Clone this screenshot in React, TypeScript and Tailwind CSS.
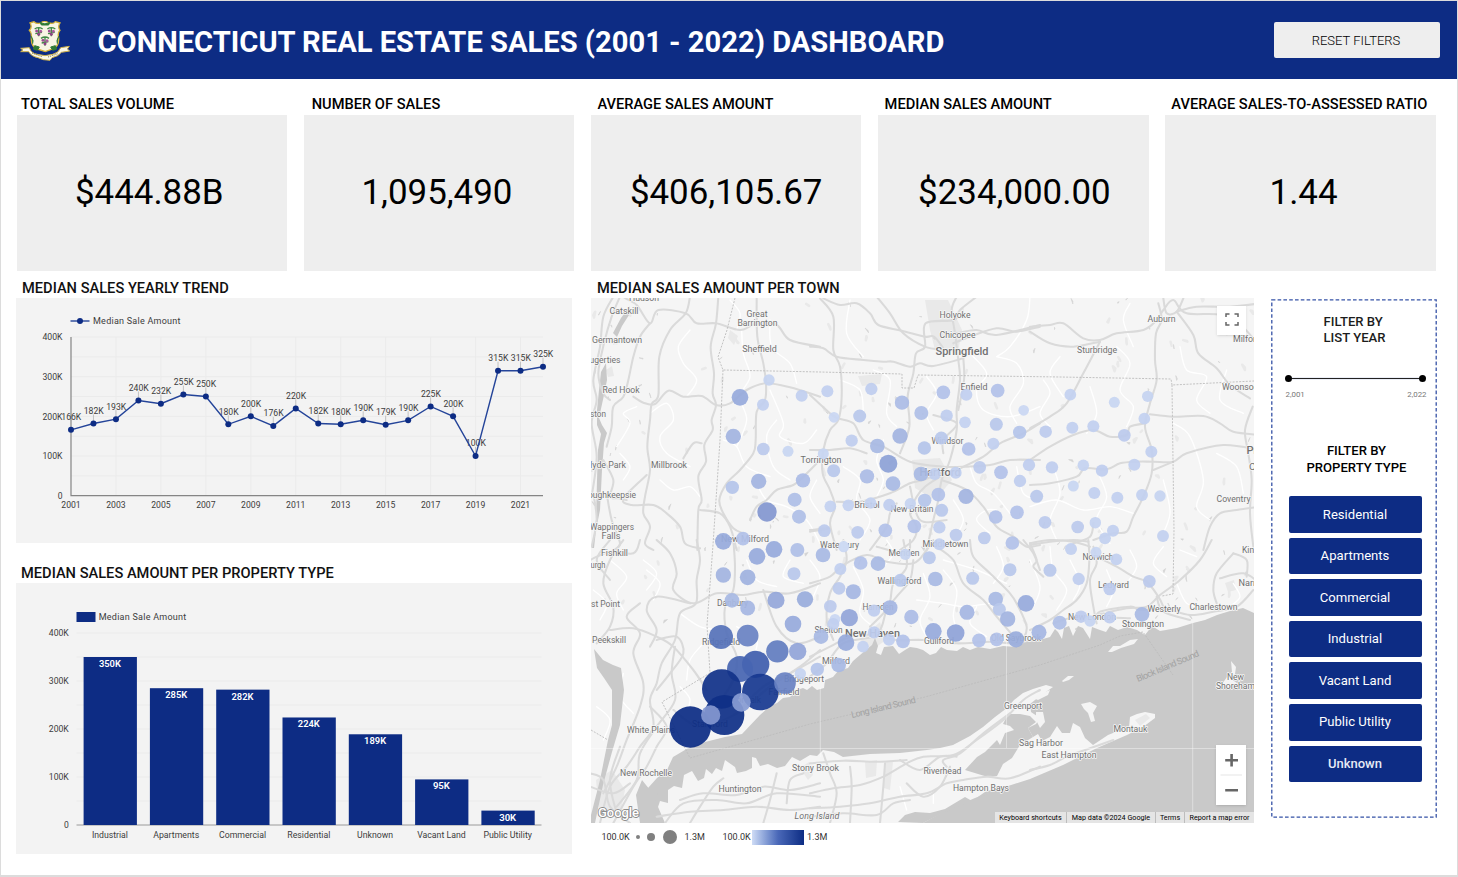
import React from "react";

const NAVY = "#0d2c84";

type Pt = [number, number];

/* ---------- helpers ---------- */

function smooth(pts: string): string {
  const p = pts
    .trim()
    .split(/\s+/)
    .map((s) => s.split(",").map(Number) as Pt);
  let d = `M${p[0][0]},${p[0][1]}`;
  for (let i = 0; i < p.length - 1; i++) {
    const a = p[i - 1] || p[i];
    const b = p[i];
    const c = p[i + 1];
    const e = p[i + 2] || c;
    d += `C${(b[0] + (c[0] - a[0]) / 6).toFixed(1)},${(b[1] + (c[1] - a[1]) / 6).toFixed(1)} ${(c[0] - (e[0] - b[0]) / 6).toFixed(1)},${(c[1] - (e[1] - b[1]) / 6).toFixed(1)} ${c[0]},${c[1]}`;
  }
  return d;
}

/* ---------- header ---------- */

function Crest() {
  return (
    <svg width="50" height="40" viewBox="0 0 150 120" className="mt-[1px] shrink-0">
      <path d="M30,6 L42,2 Q50,10 60,6 L74,0 L88,6 Q100,10 106,2 L120,6 Q112,18 120,28 Q112,36 116,50 Q118,76 98,84 L76,92 L52,84 Q32,76 34,50 Q36,36 28,28 Q38,18 30,6Z" fill="#f8f5e4" stroke="#d3b23a" strokeWidth="4" />
      <path d="M60,3 Q74,14 90,3 L86,12 H64Z M34,46 q8,14 4,22 M116,46 q-8,14 -4,22 M44,74 l14,4 -6,10 -12,-4Z M106,74 l-14,4 6,10 12,-4Z" fill="#2f7a34" stroke="#2f7a34" strokeWidth="3" />
      {[
        [56, 30],
        [94, 30],
        [75, 58],
      ].map(([x, y]) => (
        <g key={x}>
          <path d={`M${x - 12},${y - 6} q12,-8 24,0 M${x - 10},${y + 8} l20,-4 M${x},${y - 8} v24`} fill="none" stroke="#3f8a45" strokeWidth="4" />
          <circle cx={x - 6} cy={y} r="4.5" fill="#9c4f93" />
          <circle cx={x + 6} cy={y + 1} r="4.5" fill="#a85a9c" />
          <circle cx={x} cy={y + 10} r="4.5" fill="#8e4386" />
        </g>
      ))}
      <path d="M2,82 L28,80 Q34,98 52,100 L75,104 L98,100 Q116,96 122,80 L148,76 L142,84 L149,90 L124,94 Q116,106 96,110 L90,118 L70,116 L54,110 Q34,106 26,92 L2,92 L9,87Z" fill="#fbf8ea" stroke="#cdb04a" strokeWidth="3" />
      <path d="M36,96 L66,107 M84,108 L114,98" stroke="#7a7348" strokeWidth="3" strokeDasharray="3 3" />
    </svg>
  );
}

/* ---------- KPI cards ---------- */

function Kpi({ title, value, pad, shift }: { title: string; value: string; pad: string; shift: string }) {
  return (
    <section className="w-[270.5px]">
      <h2 className={`flex h-[23px] items-center whitespace-nowrap pt-[2px] text-[14.65px] font-medium leading-none text-black ${pad}`}>{title}</h2>
      <div className={`flex h-[156px] items-center justify-center bg-[#eeeeee] text-[34.9px] leading-none text-black ${shift}`}>{value}</div>
    </section>
  );
}

/* ---------- line chart ---------- */

const trend = [166, 182, 193, 240, 232, 255, 250, 180, 200, 176, 220, 182, 180, 190, 179, 190, 225, 200, 100, 315, 315, 325];

function LineChart() {
  const x = (i: number) => 71 + i * 22.476;
  const y = (v: number) => 495.7 - v * 0.3967;
  return (
    <svg width="556" height="245" viewBox="16 298 556 245" className="block bg-[#f3f3f3]" fontSize="9" fill="#3c3c3c">
      {[50, 100, 150, 200, 250, 300, 350, 400].map((v) => (
        <line key={v} x1="71" x2="543" y1={y(v)} y2={y(v)} stroke="#ebebeb" />
      ))}
      {[2, 4, 6, 8, 10, 12, 14, 16, 18, 20].map((i) => (
        <line key={i} x1={x(i)} x2={x(i)} y1="337" y2="495" stroke="#ebebeb" />
      ))}
      <path d="M71,337V495.7H543" fill="none" stroke="#858585" strokeWidth="1.2" />
      {[0, 100, 200, 300, 400].map((v) => (
        <text key={v} x="62.5" y={y(v) + 3.3} textAnchor="end" textLength={v ? 20 : 4.8} lengthAdjust="spacingAndGlyphs">
          {v ? `${v}K` : "0"}
        </text>
      ))}
      {[0, 2, 4, 6, 8, 10, 12, 14, 16, 18, 20].map((i) => (
        <text key={i} x={x(i)} y="508" textAnchor="middle" textLength="19.4" lengthAdjust="spacingAndGlyphs">
          {2001 + i}
        </text>
      ))}
      {trend.map((v, i) => (
        <g key={i}>
          <line x1={x(i)} x2={x(i)} y1={y(v) - 9} y2={y(v)} stroke="#b5b5b5" strokeWidth=".8" />
          <text x={x(i) + 0.3} y={y(v) - 9.6} textAnchor="middle" textLength="20" lengthAdjust="spacingAndGlyphs">
            {v}K
          </text>
        </g>
      ))}
      <polyline points={trend.map((v, i) => `${x(i)},${y(v)}`).join(" ")} fill="none" stroke="#244499" strokeWidth="1.4" />
      {trend.map((v, i) => (
        <circle key={i} cx={x(i)} cy={y(v)} r="3" fill={NAVY} />
      ))}
      <line x1="70.5" x2="89.5" y1="321" y2="321" stroke="#244499" strokeWidth="1.4" />
      <circle cx="80" cy="321" r="3" fill={NAVY} />
      <text x="93" y="324.3" textLength="87.5">
        Median Sale Amount
      </text>
    </svg>
  );
}

/* ---------- bar chart ---------- */

const types: [string, number, number][] = [
  ["Industrial", 350, 36],
  ["Apartments", 285, 46],
  ["Commercial", 282, 47],
  ["Residential", 224, 43],
  ["Unknown", 189, 36],
  ["Vacant Land", 95, 48.5],
  ["Public Utility", 30, 48.5],
];

function BarChart() {
  const y = (v: number) => 825 - v * 0.48;
  return (
    <svg width="556" height="271" viewBox="16 583 556 271" className="block bg-[#f3f3f3]" fontSize="9" fill="#3c3c3c">
      {[50, 100, 150, 200, 250, 300, 350, 400].map((v) => (
        <line key={v} x1="76.5" x2="541.5" y1={y(v)} y2={y(v)} stroke="#ebebeb" />
      ))}
      {[0, 100, 200, 300, 400].map((v) => (
        <text key={v} x="68.8" y={y(v) + 3} textAnchor="end" textLength={v ? 20 : 4.8} lengthAdjust="spacingAndGlyphs">
          {v ? `${v}K` : "0"}
        </text>
      ))}
      <line x1="76.5" x2="541.5" y1="825" y2="825" stroke="#9a9a9a" />
      {types.map(([name, v, w], i) => {
        const left = 83.6 + i * 66.3;
        return (
          <g key={name}>
            <rect x={left} y={y(v)} width="53.3" height={v * 0.48} fill={NAVY} />
            <text x={left + 26.3} y={y(v) + 10} textAnchor="middle" fontWeight="600" fill="#fff" textLength={v > 99 ? 22 : 17} lengthAdjust="spacingAndGlyphs">
              {v}K
            </text>
            <text x={left + 26.3} y="838" textAnchor="middle" textLength={w} lengthAdjust="spacingAndGlyphs">
              {name}
            </text>
          </g>
        );
      })}
      <rect x="76.5" y="612" width="19" height="10" fill={NAVY} />
      <text x="98.7" y="620.2" textLength="87.5">
        Median Sale Amount
      </text>
    </svg>
  );
}

/* ---------- map ---------- */

// Each tile holds marks measured on a 3x grid whose origin is (ox, oy).
type Tile = { ox: number; oy: number; roads: string[]; thin: string[]; dots: string };

const tiles: Tile[] = [
  {
    ox: 590,
    oy: 280,
    roads: [
      "300,50 287,100 240,150 208,230 205,345 185,372 180,420 172,500 180,570 165,650 160,700 180,740 165,790 190,810",
      "385,50 378,130 362,200 372,280 368,340 378,375 365,420 368,450 343,495 348,545 325,590 335,660 325,690 322,810",
      "130,350 160,368 195,372 235,332 280,350 335,348 378,375 420,370 470,330 527,310 600,322 690,350",
      "500,50 502,170 520,250 528,310 525,360 500,395 497,480 490,520 450,570 410,610 388,660 400,700 430,745 460,760",
      "60,0 100,50 140,75 180,130 205,90 287,100 320,130 378,130 450,150 500,130 560,135 600,180 690,200",
      "180,130 150,170 130,230 115,300 100,350 70,380 65,440 50,500",
      "70,50 40,110 30,200 10,300 20,360 5,430 20,530 5,650",
      "90,50 65,110 42,190 25,280 40,340 60,360",
      "170,585 100,655 125,675 190,675 230,700 270,740 285,790 330,805",
      "335,490 310,490 280,535",
      "40,540 70,600 60,650 85,655 110,660",
      "50,640 65,720 90,790 70,810",
      "480,720 500,680 530,660 560,630 610,615 640,590 690,540",
      "330,690 390,700 420,740 440,810",
      "10,640 20,720 5,800",
    ],
    thin: [
      "455,150 460,220 480,290 450,350 470,420 440,500",
      "540,120 545,200 600,250 620,310",
      "300,150 265,200 280,250 320,300 290,350",
      "180,400 230,370 250,420 210,470 230,520 300,560",
      "80,500 120,430 100,400 140,380",
      "560,420 530,470 550,560 600,600",
      "400,480 440,500 470,560 540,590",
      "210,600 250,630 300,620 330,650",
      "540,330 580,430 570,470 640,490 680,450",
      "100,600 120,560 90,520",
      "420,60 450,100 440,150",
      "500,610 530,660 590,680 650,720 690,790",
    ],
    dots: "450,352,25 537,300,17 519,374,18 635,347,18 430,469,23 520,507,19 594,514,16.5 427,622,20 506,604,23 639,601,21.5 614,659,21 627,710,21 531,696,29 400,784,25 459,776,20.5",
  },
  {
    ox: 810,
    oy: 280,
    roads: [
      "0,200 40,205 80,230 160,240 220,245 250,245 300,260 330,250 370,258 460,235",
      "30,55 70,110 70,210 90,260 95,350 85,420 60,450 40,510 38,580 60,630 75,680 60,730 80,810",
      "40,55 90,75 140,70 180,100 205,135 275,152 345,170 372,170 400,205",
      "200,50 240,100 280,160 345,200 400,210",
      "440,50 425,90 435,160 445,240 450,300 440,390 440,450 420,540 395,600 385,660 370,720 350,810",
      "500,50 450,90 432,120 347,130 345,200 318,220 310,280 293,350 298,440 270,520",
      "430,190 480,170 560,145 620,155 690,140",
      "440,160 500,150 560,165 690,135",
      "0,345 60,400 85,415 130,430 160,480 220,500 300,545 400,560 470,560 540,555 600,540 690,540",
      "0,510 60,510 120,505 170,520",
      "690,430 640,460 570,490 520,530 440,570",
      "395,600 470,630 520,680 560,740 610,770 650,800 690,795",
      "270,810 310,780 320,740 300,700 320,650 345,620 390,590",
      "80,665 150,665 240,640 300,610 340,600 400,575",
      "180,810 230,740 240,700 260,670",
      "300,620 330,720 410,720",
      "370,405 440,430 400,480 400,520",
      "460,235 462,300 445,390",
      "0,750 60,745 0,755",
    ],
    thin: [
      "90,300 150,330 160,400",
      "190,270 240,300 230,400 260,440",
      "480,220 530,280 500,330 520,390 600,410 690,380",
      "350,290 380,340 350,400 370,450",
      "560,230 620,250 640,310 600,380 620,430",
      "100,560 150,600 140,660 180,720 150,780",
      "480,560 500,610 550,640 600,700",
      "620,560 640,640 690,660",
      "220,480 200,540 220,600 200,650",
      "430,660 460,720 430,780",
      "20,600 0,650 30,700",
      "660,50 650,120 600,200 560,230",
      "120,60 110,160 160,230",
      "540,760 500,720 530,690 560,690",
    ],
    dots: "52,334,18 184,327,18.5 276,368,21.5 334,399,21 400,337,20.5 469,344,18 563,332,20.5 641,391,16 72,412,16 149,408,19.5 410,407,18.5 465,427,17.5 559,433,19.5 629,457,20 125,482,18.5 202,498,22 270,468,23 343,504,20 394,474,19.5 476,507,20.5 550,491,18 40,521,16.5 71,572,19.5 235,551,27 171,589,21.5 249,611,22 333,582,22 374,582,18 437,578,18 509,562,19 573,577,20.5 657,555,18.5 630,603,18.5 61,679,17.5 115,676,17.5 182,669,17.5 238,675,18.5 301,671,17 344,661,20 385,644,20.5 468,649,23 395,691,19.5 313,739,20.5 388,742,18.5 557,711,20.5 621,697,20.5 680,649,19.5 43,752,19 143,757,19 226,751,20.5 438,765,19 523,774,19 388,793,18 607,789,20.5 101,801,16",
  },
  {
    ox: 1030,
    oy: 280,
    roads: [
      "0,140 60,135 100,130 160,175 210,180 260,160 340,150 380,120 400,90 430,60 470,100 600,110 690,200",
      "0,155 60,190 130,200 210,185",
      "210,185 160,280 110,370 60,410 0,445",
      "385,70 395,120 378,160 375,240 380,300 360,370 345,440 365,510 365,580 340,650 310,710 290,755 250,760 190,780",
      "440,95 490,165 505,220 560,265 600,315 660,355",
      "440,95 500,80 600,80 690,70",
      "400,55 410,100 440,95 460,55",
      "360,403 430,410 520,408 570,430 610,455 690,465",
      "0,540 60,500 130,465 190,450 240,470 290,465 300,440 345,430",
      "0,615 60,610 140,590 165,565 230,568 270,550 320,545 370,545 430,545 470,520 580,495 690,510",
      "370,570 430,545",
      "520,810 540,740 570,700 620,690 690,680",
      "668,380 645,450 655,520 665,600 660,700 670,800",
      "0,790 60,780 130,785 180,800",
      "130,790 180,770 190,730",
    ],
    thin: [
      "40,300 60,340 30,400 60,440",
      "90,230 60,280 100,350",
      "260,200 300,250 270,330 310,380 290,440",
      "180,320 200,400 170,460",
      "450,200 470,270 530,290 500,360 540,400",
      "70,560 90,640 60,720 80,780",
      "200,570 230,650 200,720 240,790",
      "430,430 480,470 520,600 500,680 540,720",
      "560,520 620,560 640,640",
      "300,70 280,120 310,200",
      "0,680 80,660 160,690 240,680 310,700",
      "590,270 570,360 640,400",
      "400,600 420,700 390,780",
    ],
    dots: "121,344,17.5 253,367,16.5 353,349,17 343,416,17.5 127,443,18 190,439,18 47,455,18.8 283,466,19 364,515,18 66,562,18.5 160,556,17.2 216,572,18.5 313,554,18 130,618,16.5 193,639,18 262,653,18 336,645,17.8 390,648,17 45,727,19 143,741,19 196,728,17.2 249,752,18 225,775,17.8 399,768,17.8",
  },
  {
    ox: 590,
    oy: 540,
    roads: [
      "100,0 60,60 40,130 70,200 60,260 20,310",
      "0,60 60,35 130,40 150,0",
      "200,0 240,40 260,100 250,150 310,190 380,160 460,165 520,155 600,160 690,130",
      "320,0 330,60 320,120 318,190 270,220 255,300 215,370 200,430 180,480 190,560 150,620 110,680 60,740 30,849",
      "60,270 130,265 200,290 250,320 310,390 350,450",
      "150,190 110,230 150,280 130,340 160,430 150,500 110,600 80,680 40,760",
      "430,0 435,80 430,150 405,200 410,280 440,350 430,420 380,500",
      "200,300 260,290 280,340 240,400 200,450",
      "255,320 245,400 255,480 200,560 150,640 140,720 80,800",
      "300,190 200,170 170,210 200,270 180,320",
      "180,500 230,560 200,620 170,680 130,740 70,849",
      "250,510 330,560 440,520 540,440 630,380 690,330",
      "440,520 520,440 600,400 690,350",
      "60,0 20,60 60,120",
      "520,150 560,260 620,310 690,290",
      "225,849 280,790 380,780 470,790 560,760 690,770",
      "200,830 300,815 400,810 500,800 600,810 690,800",
      "270,780 340,760 440,765 520,740 600,750 690,730",
      "300,849 330,800 370,740 400,715",
      "520,849 540,780 560,700",
      "0,700 40,720 60,800 120,849",
      "0,740 70,760 120,730",
      "90,620 60,720 80,820",
      "590,790 600,720 640,700",
    ],
    thin: [
      "60,60 110,110 80,160 100,210",
      "160,60 200,100 170,150",
      "270,220 330,260 390,270",
      "100,400 90,470 130,520",
      "340,310 300,360 290,420",
      "470,60 500,120 560,140",
      "600,60 580,110 640,130",
      "20,500 60,540 40,600",
      "270,440 300,480 280,540",
      "440,260 500,300 490,350",
      "170,90 210,130 190,180",
      "10,150 50,190 30,240",
    ],
    dots: "400,105,23 473,112,23.5 501,49,25 552,28,25 622,30,21 612,101,19.5 426,181,22 473,204,22.5 558,181,25.5 645,178,24.5 609,252,25 393,291,36 473,287,32.5 562,334,33.5 623,334,26 497,373,41 450,387,39 395,447,59 511,456,55 403,525,60 301,561,62 585,429,32.5 631,401,17 454,487,28 362,525,29",
  },
  {
    ox: 810,
    oy: 540,
    roads: [
      "0,130 60,110 100,75 170,45 230,65 310,70 350,30 370,0",
      "100,0 110,60 90,110 60,160 50,240 70,300",
      "310,60 300,120 260,170 230,210 215,260 190,290 100,310 50,370 0,410",
      "280,0 290,80 250,130 235,200 180,260",
      "0,350 60,320 120,290 190,285 260,300 340,300 440,310 540,305 620,310 690,290",
      "380,20 430,60 460,130 520,180 560,230 620,300",
      "480,0 490,50 540,100 600,160 625,200 650,260 640,300",
      "640,0 670,40 690,90",
      "0,760 70,745 150,735 220,710 290,670 340,650 430,645 500,600 580,540 640,480 690,450",
      "270,660 330,690 390,650 440,650",
      "0,805 90,800 180,790 270,770 350,760 410,730 460,720 530,710 600,715 690,680",
      "0,830 100,820 200,825 250,790 300,780",
      "60,849 80,760 60,700 40,640",
      "120,849 125,740 120,680",
      "210,849 220,740 225,670",
      "290,730 340,770 390,740 420,680",
      "0,670 100,662 200,665 290,660",
      "410,680 400,660 450,640 520,580 600,520",
      "300,0 290,40 200,20",
    ],
    thin: [
      "0,60 30,110 10,170",
      "130,80 160,150 150,220 190,260",
      "340,100 360,170 330,240 350,290",
      "400,90 440,150 430,230 450,290",
      "500,200 480,250 530,290",
      "560,20 580,80 550,130",
      "230,0 250,40 220,80",
      "270,740 290,810",
      "370,760 370,790",
      "400,60 500,90 590,130",
      "320,180 400,190 460,200 540,190",
    ],
    dots: "39,45,22 101,18,15 152,69,20.5 204,71,22 91,87,18 87,145,19 130,155,22.5 61,199,19 118,233,26 75,238,16 70,252,18 33,290,22 108,308,25 159,320,17.5 192,212,18.5 240,203,22.5 192,277,18.5 237,299,18 279,304,20.5 304,231,21.5 86,375,22 22,388,20 286,43,17 358,53,19.5 271,121,19.5 376,117,22 488,115,19.5 600,89,19.5 471,217,22.5 557,177,22 568,208,19.5 593,237,23 648,190,25 370,274,25 437,279,26.5 507,301,20.5 560,298,20.5 618,298,24.5",
  },
  {
    ox: 1030,
    oy: 540,
    roads: [
      "0,10 20,60 10,80 40,110",
      "175,0 178,60 170,130 140,180 100,210 60,240 0,270",
      "190,20 200,70 180,120 190,200 200,250",
      "200,50 260,80 310,110 350,125 385,170 400,200",
      "200,240 210,215 300,200 330,210 400,205 480,225 550,215 620,200 670,150",
      "545,0 510,60 450,120 390,165 350,200 290,205 200,225",
      "0,15 60,5 130,0 175,5",
      "610,40 560,100 550,150 560,190",
      "610,40 650,60 650,110",
      "0,690 60,675 110,650 180,625 250,600",
      "70,250 120,235 200,232 300,235",
      "380,170 400,215 480,240",
      "570,115 640,100 690,130",
    ],
    thin: [
      "60,20 70,90 110,150 80,210",
      "120,60 150,130 130,180",
      "400,20 370,70 410,110",
      "450,30 500,50",
      "230,90 250,150 230,200",
      "300,30 320,80 290,130",
      "610,130 630,170 600,200",
      "440,130 470,190 520,200",
      "0,60 30,140 10,200",
    ],
    dots: "123,27,18 198,37,16.5 60,91,19.5 146,117,18.5 259,58,17.8 239,147,18.8 358,124,19 89,248,21 153,230,18.8 180,243,17 239,232,18.5 336,223,22 27,277,22.5",
  },
];

const northShore =
  "645,823 640,807 638,792 648,788 657,778 667,770 673,757 690,747 705,742 725,737 742,734 760,715 770,706 777,703 783,698 790,697 797,690 803,688 807,690 812,686 817,690 824,688 825,680 833,677 838,671 848,668 853,661 860,655 866,650 872,645 875,638 878,646 876,653 881,655 884,647 893,646 899,654 905,650 910,647 917,648 923,650 930,655 936,653 941,647 947,650 957,651 963,647 970,650 978,647 990,649 1003,646 1017,647 1025,642 1036,641 1050,637 1055,629 1058,632 1062,639 1064,628 1069,626 1073,636 1078,626 1083,628 1090,639 1092,627 1100,630 1106,632 1110,626 1118,630 1127,627 1137,630 1145,635 1152,626 1160,631 1166,630 1177,628 1193,623 1205,620 1217,615 1230,611 1243,608 1254,613";
const southShore =
  "1254,823 923,823 945,811 975,798 1005,787 1030,779 1063,765 1097,748 1127,735 1143,727 1155,718 1155,714 1145,712 1137,714 1130,717 1129,728 1118,731 1108,735 1093,745 1085,738 1080,727 1073,723 1070,733 1062,733 1057,726 1050,737 1042,741 1038,734 1033,737 1028,728 1036,724 1040,718 1031,712 1030,704 1040,696 1053,687 1046,685 1033,689 1023,693 1014,700 1007,708 995,717 983,727 970,736 953,745 940,748 927,750 900,753 870,754 843,757 834,752 823,750 817,756 810,755 800,761 792,757 785,766 777,768 768,764 760,766 756,758 752,757 752,768 746,771 737,773 735,767 725,760 722,771 716,768 712,774 706,769 704,778 698,781 692,771 684,775 682,788 674,786 668,790 668,803 660,801 657,810 663,823";

const water = [
  "965,770 977,757 985,752 997,740 1000,745 1005,733 1014,730 1010,726 1003,724 1008,714 1020,714 1030,716 1036,722 1028,728 1033,737 1020,745 1012,758 1003,764 997,776 988,777 978,774",
  "898,822 905,815 915,812 930,813 945,809 955,803 965,797 972,801 985,792 997,788 1005,787 975,799 945,812 923,823",
  "613,333 621,318 627,310 630,306 629,315 622,326 617,337",
  "601,372 606,363 607,380 604,395 599,418 602,425 607,433 604,443 602,470 600,510 596,530 594,548 592,548 596,520 597,480 598,450 601,434 597,425 597,410 599,390",
  "594,649 603,660 613,665 621,668 624,690 620,725 612,752 603,785 595,823 591,823 591,815 600,780 608,740 612,725 612,690 604,678 597,668",
  "636,795 642,780 650,790 660,788 655,800 665,823 640,823",
];

const islands = [
  "1108,652 1113,646 1120,646 1130,640 1138,639 1134,644 1121,648 1112,652",
  "1062,681 1068,676 1074,676 1069,680 1063,682",
  "1081,704 1090,702 1097,706 1093,713 1095,721 1091,722 1088,713 1084,709",
  "1231,661 1236,667 1235,674 1231,679 1240,685 1230,688 1222,684 1227,677 1232,672",
  "1033,698 1042,693 1050,690 1048,695 1038,700",
  "1036,712 1043,712 1045,722 1040,728 1036,720",
];

const urban = [
  "925,300 948,300 962,330 958,352 935,350 930,330",
  "858,376 882,374 880,384 862,386",
  "800,768 809,762 813,775 808,780",
  "865,762 877,760 876,776 866,778",
  "885,762 893,762 890,790 884,788",
  "912,460 940,458 952,480 935,500 915,488",
  "860,640 880,622 886,640 872,650",
  "596,780 612,770 625,790 620,815 600,818",
  "1225,583 1234,580 1236,590 1228,592",
  "730,330 738,336 734,345 728,338",
  "606,370 612,366 614,376 608,377",
  "1135,720 1146,714 1150,718 1140,726",
];

const borders = [
  "735,298 727,330 718,357 723,370 820,372 902,374 902,388 914,388 918,375 1060,377 1171,379 1172,385 1254,381",
  "723,370 720,440 715,515 713,545 707,625 710,673 662,702 690,758 810,724 925,697 1040,665 1100,645 1120,636 1143,632 1173,675",
  "1172,385 1173,460 1174,530 1173,594 1162,596",
  "591,730 608,740",
];

// text, centre x, baseline y, width, font size, weight
const labels: [string, number, number, number, number, number][] = [
  ["Hudson", 644, 301, 30, 9, 400],
  ["Catskill", 624, 313.5, 29, 9, 400],
  ["Germantown", 617, 343, 50, 9, 400],
  ["ugerties", 605, 363.3, 31, 9, 400],
  ["Red Hook", 621, 393, 37, 9, 400],
  ["ston", 598, 417, 16, 9, 400],
  ["Millbrook", 669, 467.5, 36, 9, 400],
  ["Hyde Park", 606, 467.5, 40, 9, 400],
  ["oughkeepsie", 612, 498, 48, 9, 400],
  ["Wappingers", 612, 530, 44, 9, 400],
  ["Falls", 611, 539, 19, 9, 400],
  ["Great", 757, 317, 21, 9, 400],
  ["Barrington", 757.5, 325.5, 40, 9, 400],
  ["Sheffield", 759.5, 352, 34.5, 9, 400],
  ["Torrington", 821, 462.5, 41, 9, 400],
  ["New Milford", 745, 541.5, 48, 9, 400],
  ["Holyoke", 955, 318, 31, 9, 400],
  ["Chicopee", 957.5, 337.7, 36, 9, 400],
  ["Springfield", 962, 355.3, 53, 10.5, 500],
  ["Enfield", 974, 390, 27, 9, 400],
  ["Windsor", 947.5, 443.5, 32, 9, 400],
  ["Hartford", 940, 475.5, 41, 11, 500],
  ["Bristol", 867, 508, 25.5, 9, 400],
  ["New Britain", 912, 512, 43, 9, 400],
  ["Waterbury", 839.5, 548, 39, 9, 400],
  ["Middletown", 945.5, 547, 46, 9, 400],
  ["Meriden", 904, 555.5, 31, 9, 400],
  ["Auburn", 1161.5, 321.8, 28, 9, 400],
  ["Sturbridge", 1097, 352.5, 40, 9, 400],
  ["Milford", 1247, 341.5, 28, 9, 400],
  ["Woonsocket", 1246, 390.3, 48, 9, 400],
  ["Pr", 1252, 453.5, 11, 11, 500],
  ["Cr", 1254, 470, 10, 9, 400],
  ["Coventry", 1233.5, 501.5, 34, 9, 400],
  ["Kingstown", 1262, 553, 40, 9, 400],
  ["Narragansett", 1265, 586, 53, 9, 400],
  ["Fishkill", 614.5, 556, 27, 9, 400],
  ["urgh", 598, 568, 15, 9, 400],
  ["st Point", 605.5, 607, 29, 9, 400],
  ["Peekskill", 609, 643, 34, 9, 400],
  ["Danbury", 732.5, 606, 31, 9, 400],
  ["Ridgefield", 721, 645, 38, 9, 400],
  ["Bridgeport", 804, 682, 40, 9, 400],
  ["Fairfield", 784, 695, 31, 9, 400],
  ["Norwalk", 746, 703, 30, 9, 400],
  ["Stamford", 710, 727, 36, 9, 400],
  ["White Plains", 651, 733, 48, 9, 400],
  ["New Rochelle", 646, 776, 52, 9, 400],
  ["Huntington", 740, 791.5, 43, 9, 400],
  ["Stony Brook", 815.5, 771, 47, 9, 400],
  ["Wallingford", 899.5, 583.7, 44, 9, 400],
  ["Hamden", 878, 610, 31, 9, 400],
  ["Shelton", 828.5, 633, 28, 9, 400],
  ["New Haven", 872.5, 636.7, 55, 10.5, 500],
  ["Milford", 836, 664, 28, 9, 400],
  ["Guilford", 939, 643.5, 30, 9, 400],
  ["Old Saybrook", 1016, 640.5, 50, 9, 400],
  ["Greenport", 1023, 708.5, 38, 9, 400],
  ["Sag Harbor", 1041, 745.5, 44, 9, 400],
  ["Riverhead", 942.5, 774, 38, 9, 400],
  ["Hampton Bays", 981, 791, 56, 9, 400],
  ["Norwich", 1098, 560, 31, 9, 400],
  ["Ledyard", 1113.5, 588, 31, 9, 400],
  ["New London", 1092, 619.5, 48, 9, 400],
  ["Westerly", 1164, 612.3, 33, 9, 400],
  ["Charlestown", 1213.5, 610, 48, 9, 400],
  ["Stonington", 1143, 627, 42, 9, 400],
  ["New", 1235.5, 680, 17, 9, 400],
  ["Shoreham", 1235.5, 688.5, 39, 9, 400],
  ["Montauk", 1130.5, 732.3, 34, 9, 400],
  ["East Hampton", 1069, 758, 55, 9, 400],
];

const ramp: [number, number[]][] = [
  [5, [205, 218, 243]],
  [6, [193, 207, 239]],
  [7, [174, 190, 230]],
  [8.3, [151, 170, 219]],
  [9.7, [130, 151, 208]],
  [11, [101, 127, 193]],
  [13.3, [66, 97, 175]],
  [18, [26, 59, 146]],
  [20.6, [12, 44, 132]],
];

function shade(r: number) {
  for (let i = 1; i < ramp.length; i++) {
    if (r <= ramp[i][0] || i === ramp.length - 1) {
      const [a, ca] = ramp[i - 1];
      const [b, cb] = ramp[i];
      const t = Math.min(1, Math.max(0, (r - a) / (b - a)));
      return `rgb(${ca.map((v, k) => Math.round(v + (cb[k] - v) * t)).join(",")})`;
    }
  }
  return "";
}

const bubbles = tiles.flatMap((t) =>
  t.dots.split(" ").map((s) => {
    const [x, y, r] = s.split(",").map(Number);
    return { x: t.ox + x / 3, y: t.oy + y / 3, r: r / 3 };
  }),
);

// Small ponds and parks scattered over the land.
const flecks = (() => {
  let s = 7;
  const rnd = () => (s = (s * 16807) % 2147483647) / 2147483647;
  return Array.from({ length: 240 }, () => {
    const x = 591 + rnd() * 663;
    const y = 298 + rnd() * 330;
    const a = rnd() * 3;
    const l = 1 + rnd() * 3;
    return { d: `M${x.toFixed(1)},${y.toFixed(1)}l${(Math.cos(a) * l).toFixed(1)},${(Math.sin(a) * l).toFixed(1)}l${(rnd() * 2 - 1).toFixed(1)},${(rnd() * 3).toFixed(1)}z`, park: rnd() > 0.55 };
  });
})();

function TownMap() {
  return (
    <svg width="663" height="525" viewBox="591 298 663 525" className="block bg-[#f5f5f5]">
      {urban.map((p) => (
        <polygon key={p} points={p} fill="#e9e9e9" />
      ))}
      {flecks.map((f, i) => (
        <path key={i} d={f.d} fill={f.park ? "#e8e8e8" : "#d2d2d2"} stroke={f.park ? "#e9e9e9" : "#d6d6d6"} strokeWidth={f.park ? 2.5 : 0.7} strokeLinejoin="round" />
      ))}
      {tiles.map((t) => (
        <g key={`${t.ox}-${t.oy}-local`} transform={`translate(${t.ox} ${t.oy}) scale(.33333)`} fill="none" stroke="#ffffff" strokeWidth="4" strokeLinecap="round">
          {t.thin.map((p) => (
            <path key={p} d={smooth(p)} />
          ))}
        </g>
      ))}
      <polygon points={`${northShore} ${southShore}`} fill="#c9c9c9" />
      {water.map((p) => (
        <polygon key={p} points={p} fill="#c9c9c9" />
      ))}
      {islands.map((p) => (
        <polygon key={p} points={p} fill="#f4f4f4" />
      ))}
      {tiles.map((t) => (
        <g key={`${t.ox}-${t.oy}-main`} transform={`translate(${t.ox} ${t.oy}) scale(.33333)`} fill="none" stroke="#dadada" strokeWidth="6.2" strokeLinecap="round">
          {t.roads.map((p) => (
            <path key={p} d={smooth(p)} />
          ))}
        </g>
      ))}
      {borders.map((p) => (
        <polyline key={p} points={p} fill="none" stroke="#bcbcbc" strokeWidth=".9" strokeDasharray="2 1.3" />
      ))}
      <path d="M591,748.5H1254M820.3,688V757M1006.5,640V748M1192.7,623V823" stroke="#fff" strokeOpacity=".4" fill="none" />
      <g fontSize="9" fill="#a2a2a2">
        <text transform="translate(852 718) rotate(-13.5)" textLength="66">
          Long Island Sound
        </text>
        <text transform="translate(1138 682) rotate(-23)" textLength="67">
          Block Island Sound
        </text>
      </g>
      <g fill="#707070" textAnchor="middle" stroke="#f7f7f7" strokeWidth="1.6" strokeLinejoin="round" paintOrder="stroke">
        {labels.map(([t, x, y, w, size, weight]) => (
          <text key={`${t}${x}`} x={x} y={y} fontSize={size} fontWeight={weight} textLength={w} lengthAdjust="spacingAndGlyphs">
            {t}
          </text>
        ))}
        <text x="817" y="819" fontSize="9" fontStyle="italic" textLength="45">
          Long Island
        </text>
      </g>
      {bubbles.map((b, i) => (
        <circle key={i} cx={b.x} cy={b.y} r={b.r} fill={shade(b.r)} fillOpacity=".93" />
      ))}
      <text x="598" y="817" fontSize="13" fontWeight="500" fill="#fff" stroke="#8c8c8c" strokeWidth="1.8" paintOrder="stroke" textLength="41">
        Google
      </text>
    </svg>
  );
}

function MapControls() {
  return (
    <>
      <button className="absolute right-[8px] top-[8px] flex size-[29px] items-center justify-center bg-white shadow-sm" aria-label="Toggle fullscreen">
        <svg width="14" height="13" viewBox="0 0 14 13" fill="none" stroke="#666" strokeWidth="1.5" className="mb-[2px]">
          <path d="M1,4V1H4.5M9.5,1H13V4M13,9V12H9.5M4.5,12H1V9" />
        </svg>
      </button>
      <div className="absolute right-[8px] top-[447px] flex h-[60px] w-[30px] flex-col items-center bg-white shadow">
        <svg width="30" height="60" viewBox="0 0 30 60" stroke="#666" strokeWidth="2.6">
          <path d="M9.2,15.3H22M15.6,9V21.6M9.2,45.2H22" />
          <path d="M4.5,30H26" stroke="#eee" strokeWidth="1.5" />
        </svg>
      </div>
      <div className="absolute bottom-0 right-0 flex h-[11px] items-center divide-x divide-[#bdbdbd] bg-[#e5e5e5] text-[7.2px] leading-[11px] text-black">
        <span className="w-[72px] whitespace-nowrap text-center">Keyboard shortcuts</span>
        <span className="w-[89px] whitespace-nowrap text-center">Map data ©2024 Google</span>
        <span className="w-[29px] whitespace-nowrap text-center">Terms</span>
        <span className="w-[69px] whitespace-nowrap text-center">Report a map error</span>
      </div>
    </>
  );
}

function MapLegend() {
  return (
    <div className="mt-[4px] flex h-[20px] items-center pl-[10.5px] text-[9px] leading-none text-[#333]">
      <span className="w-[34.5px]">100.0K</span>
      <span className="size-[4px] rounded-full bg-[#808080]" />
      <span className="ml-[7px] size-[8px] rounded-full bg-[#808080]" />
      <span className="ml-[8px] size-[14px] rounded-full bg-[#808080]" />
      <span className="ml-[7.5px] w-[38px]">1.3M</span>
      <span className="w-[29.5px]">100.0K</span>
      <span className="h-[15px] w-[52px] bg-linear-to-r from-[#cfdcf5] via-[#4a68b8] to-[#0d2c84]" />
      <span className="ml-[3px]">1.3M</span>
    </div>
  );
}

/* ---------- filters ---------- */

function Filters() {
  return (
    <aside className="relative mt-[22px] flex h-[519px] w-[166px] flex-col items-center">
      <svg className="absolute inset-0" width="166" height="519" viewBox="0 0 166 519">
        <rect x=".8" y=".8" width="164.4" height="517.4" fill="none" stroke="#3552a6" strokeWidth="1.3" strokeDasharray="3.6 2.2" />
      </svg>
      <h3 className="mt-[15px] pl-[1px] text-[13.1px] font-medium leading-[16px] text-[#1c1c1c]">
        FILTER BY
        <br />
        LIST YEAR
      </h3>
      <div className="ml-[3.5px] mt-[29px] flex w-[141px] items-center">
        <span className="size-[7px] rounded-full bg-black" />
        <span className="h-[1.5px] flex-1 bg-[#222] shadow-[0_0_1px_#3552a6]" />
        <span className="size-[7px] rounded-full bg-black" />
      </div>
      <div className="ml-[4px] mt-[8px] flex w-[141px] justify-between text-[7.9px] leading-[9px] text-[#777]">
        <span>2,001</span>
        <span>2,022</span>
      </div>
      <h3 className="mt-[44px] pl-[5px] text-center text-[13.1px] font-medium leading-[16.5px] text-black">
        FILTER BY
        <br />
        PROPERTY TYPE
      </h3>
      <div className="ml-[2px] mt-[20.3px] flex flex-col gap-[5.05px]">
        {["Residential", "Apartments", "Commercial", "Industrial", "Vacant Land", "Public Utility"].map((t) => (
          <button key={t} className="h-[36.5px] w-[133px] rounded-[2px] bg-[#0d2c84] text-[13.1px] text-white">
            {t}
          </button>
        ))}
        <button className="h-[36.5px] w-[133px] rounded-[2px] bg-[#0d2c84] text-[13px] font-medium text-[#e6eaf5]">Unknown</button>
      </div>
    </aside>
  );
}

export default function App() {
  return (
    <div className="flex h-[877px] w-[1458px] flex-col overflow-hidden border-x border-t border-b-2 border-[#dcdcdc] bg-white font-['Roboto',sans-serif]">
      <header className="flex h-[78px] shrink-0 items-center bg-[#0d2c84] pl-[19px] pr-[17.5px]">
        <Crest />
        <h1 className="ml-[27.5px] mt-[6px] whitespace-nowrap text-[29.14px] font-bold leading-none text-white">CONNECTICUT REAL ESTATE SALES (2001 - 2022) DASHBOARD</h1>
        <button className="ml-auto h-[36px] w-[166px] rounded-[2px] bg-[#eeeeee] pr-[1px] pt-[2px] text-[13px] font-light text-black">RESET FILTERS</button>
      </header>

      <div className="flex shrink-0 justify-between pl-[15.5px] pr-[21.2px] pt-[13px]">
        <Kpi title="TOTAL SALES VOLUME" value="$444.88B" pad="pl-[4.5px]" shift="pr-[5px]" />
        <Kpi title="NUMBER OF SALES" value="1,095,490" pad="pl-[8px]" shift="pr-[4px]" />
        <Kpi title="AVERAGE SALES AMOUNT" value="$406,105.67" pad="pl-[6.5px]" shift="pr-0" />
        <Kpi title="MEDIAN SALES AMOUNT" value="$234,000.00" pad="pl-[6.5px]" shift="pl-[2px]" />
        <Kpi title="AVERAGE SALES-TO-ASSESSED RATIO" value="1.44" pad="pl-[6px]" shift="pl-[6px]" />
      </div>

      <main className="flex pl-[15px] pt-[6px]">
        <div className="flex w-[556px] flex-col">
          <h2 className="flex h-[21px] items-center pl-[6px] pt-[2px] text-[14.65px] font-medium leading-none text-[#111]">MEDIAN SALES YEARLY TREND</h2>
          <LineChart />
          <h2 className="mt-[19px] flex h-[21px] items-center pl-[5px] pt-[2px] text-[14.65px] font-medium leading-none text-[#111]">MEDIAN SALES AMOUNT PER PROPERTY TYPE</h2>
          <BarChart />
        </div>
        <div className="ml-[19px] w-[663px]">
          <h2 className="flex h-[21px] items-center pl-[6px] pt-[2px] text-[14.65px] font-medium leading-none text-[#111]">MEDIAN SALES AMOUNT PER TOWN</h2>
          <div className="relative">
            <TownMap />
            <MapControls />
          </div>
          <MapLegend />
        </div>
        <div className="ml-[17px]">
          <Filters />
        </div>
      </main>
    </div>
  );
}
